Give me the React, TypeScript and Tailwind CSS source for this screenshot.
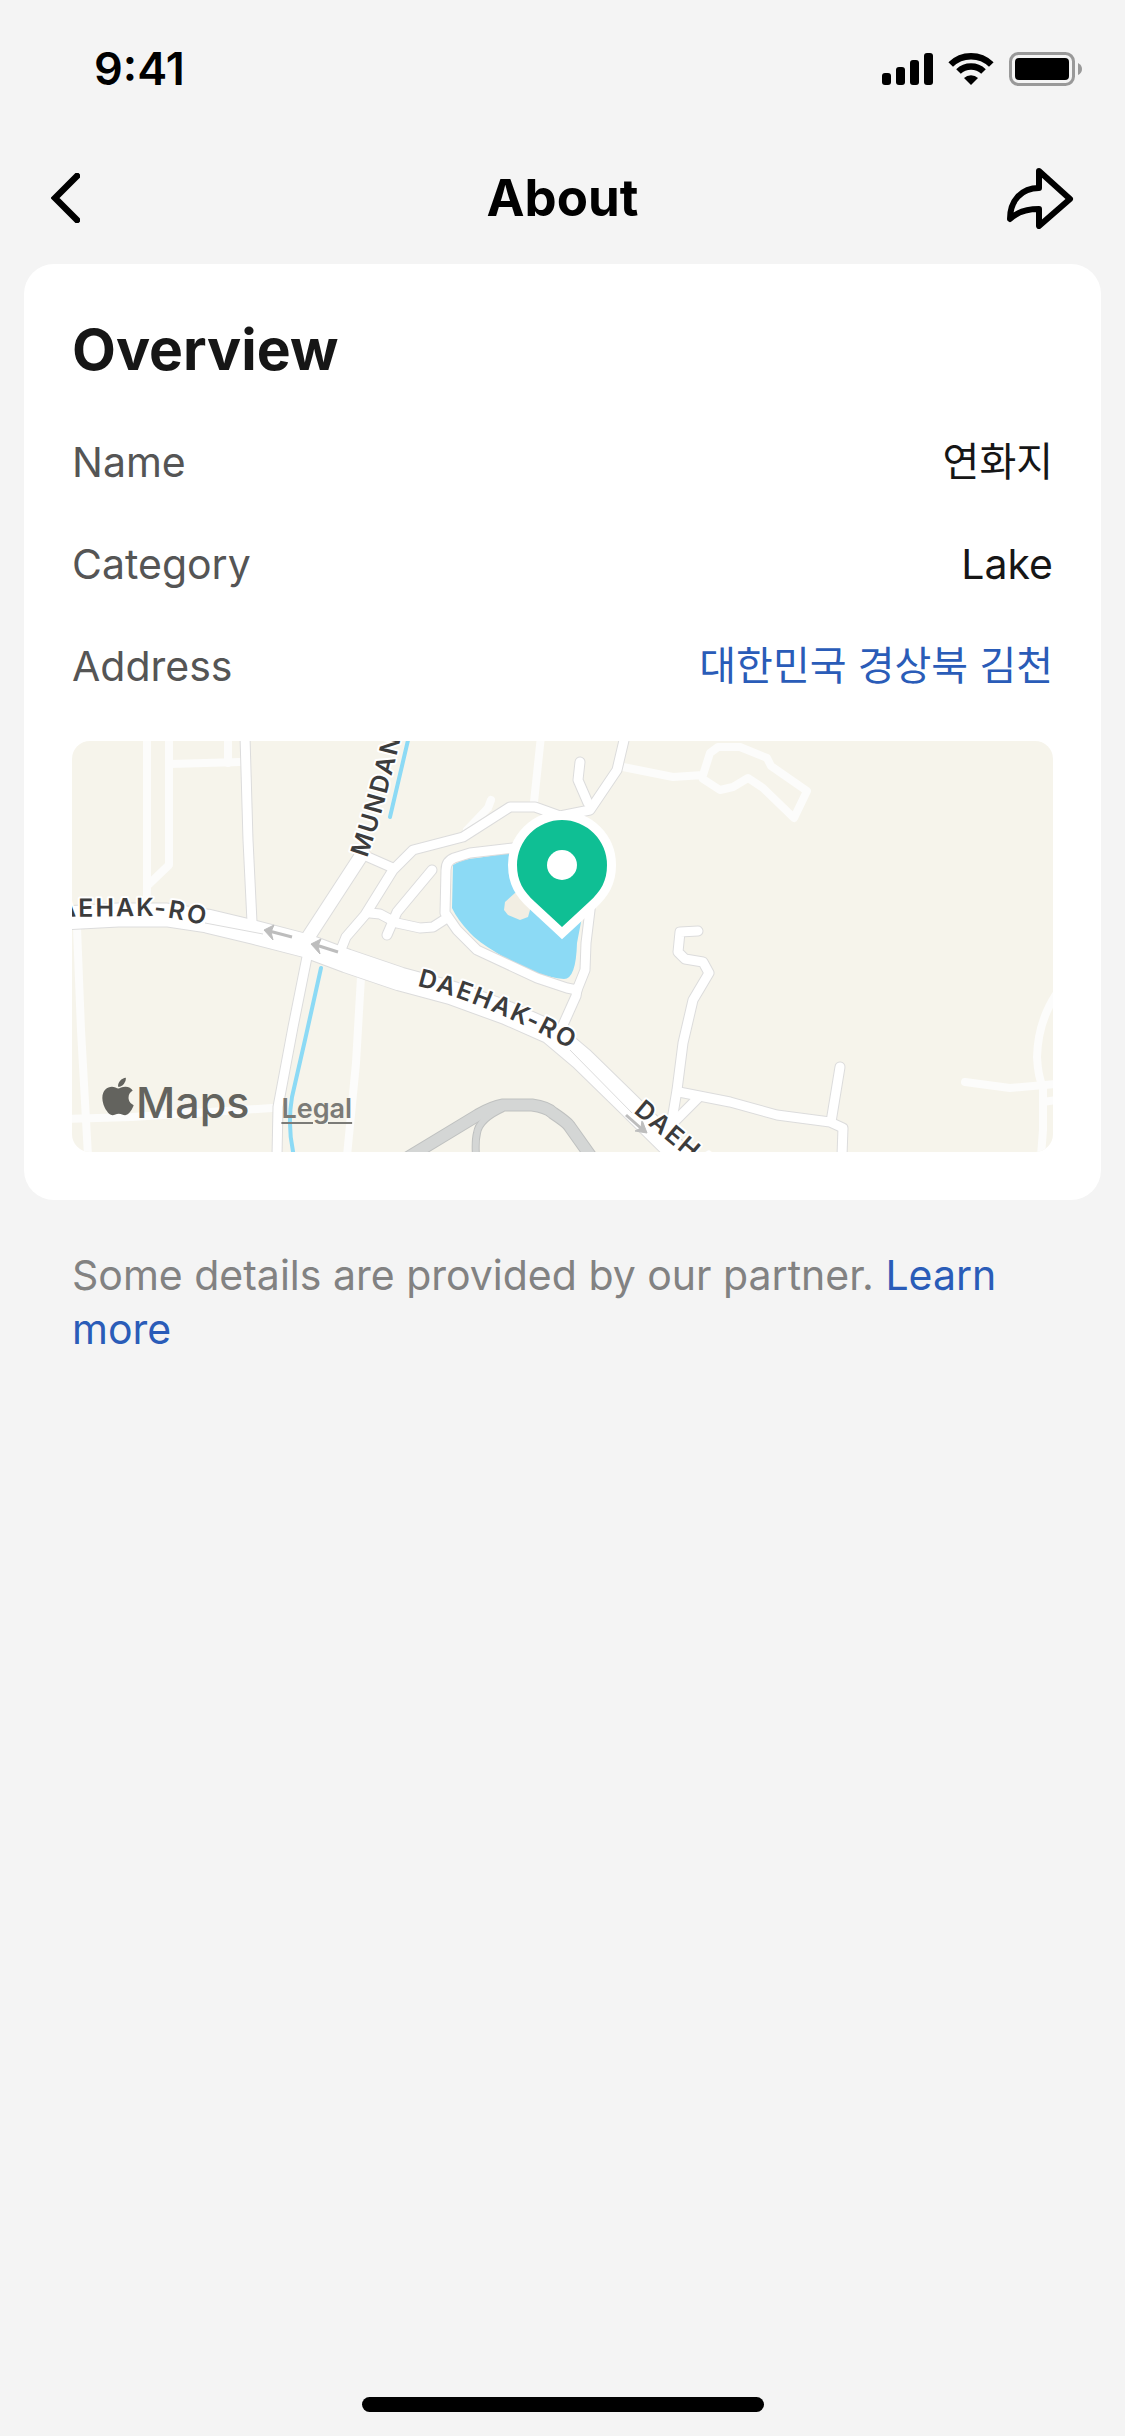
import type { ReactNode } from "react";
import { FaApple } from "react-icons/fa";

const sideStreets = [
  "M75 -5V156",
  "M97 -5V124L76 144",
  "M98 23L168 21",
  "M156 -5V22",
  "M5 187L9 289L16 415",
  "M-5 378L60 376L200 367",
  "M289 236L284 322L275 415",
  "M469 -5L462 61",
  "M419 59L416 67L395 89",
  "M551 26L601 36L631 34L638 12L646 6L668 6L695 17L699 25L735 50L722 77L691 47L676 37L661 46L648 49L631 38",
  "M893 341L938 347L985 343",
  "M985 252Q966 280 965 316Q966 336 971 346L971 389L969 415",
  "M971 361L985 359",
];

const streets = [
  "M173 -5L176 99L180 181",
  "M235 216L221 286L206 366L205 415",
  "M270 206L274 196L293 174L321 129L341 109L391 96L438 66H463L488 75L518 69L545 29L553 -5",
  "M296 116L321 127",
  "M508 21L506 39L516 62",
  "M298 172L308 173L325 182L348 187L361 186L375 177",
  "M360 129L325 171L315 194",
  "M376 176L373 172L374 129Q374 120 382 117L398 112L441 107L500 108L520 140L518 169L514 202L513 229L505 249L495 247L465 237L405 209L385 189Z",
  "M505 249L504 255L491 284",
  "M626 190L608 191L606 211L613 218L631 221L637 232L621 259L611 302L605 349L599 385",
  "M607 351L658 361L705 374L758 381L771 387L770 415",
  "M768 326L759 381",
  "M626 357L601 382",
];

const avenue = "M235 198L291 112";
const mainRoad =
  "M-10 177L46 174H95L135 180L181 191L235 205L275 220L328 238L380 252L435 272L478 291L510 318L551 358L612 418";
const expressway = ["M335 417L406 374Q420 366 431 364H460Q475 366 481 372Q496 382 498 386L520 417", "M404 415Q403 400 405 392Q407 378 431 367"];
const arrows = ["M220 196L197 190", "M266 211L244 204", "M554 374L571 389"];
const arrowHeads = ["M192 189L202 184L199 191L201 199Z", "M239 203L249 198L246 205L248 213Z", "M575 392L563 390L569 387L570 379Z"];

const labels = [
  { id: "label-west", d: "M-33 176L75 175Q105 176 145 188", text: "DAEHAK-RO" },
  { id: "label-middle", d: "M345 245Q425 265 515 318", text: "DAEHAK-RO" },
  { id: "label-east", d: "M561 371L720 505", text: "DAEHAK-RO" },
  { id: "label-north", d: "M295 117Q312 70 340 -50", text: "MUNDAN" },
];

const MapDrawing = () => (
  <svg viewBox="0 0 981 411" className="block w-full" role="img" aria-label="Map">
    <rect width="981" height="411" fill="#f6f4eb" />
    <g fill="none" stroke="#fcfcfb" strokeWidth="8" strokeLinecap="round" strokeLinejoin="round">
      {sideStreets.map((d) => <path key={d} d={d} />)}
    </g>

    <g fill="none" strokeLinejoin="round">
      {expressway.map((d, i) => <path key={d} d={d} stroke="#bfc1c0" strokeWidth={i ? 8 : 13} />)}
      {expressway.map((d, i) => <path key={d} d={d} stroke="#d4d6d5" strokeWidth={i ? 6 : 11} />)}
    </g>

    <path d="M381 124Q390 118 405 117L438 112H500L510 176L505 202Q504 238 492 238Q480 237 461 231Q440 222 425 212Q405 200 398 192Q385 178 380 167Z" fill="#8cdaf5" />
    <path d="M433 161L443 152H452L460 162L456 176L448 179L436 174L432 169Z" fill="#f2eee3" />

    <g fill="none" stroke="#dcdcdc" strokeLinecap="round" strokeLinejoin="round">
      {streets.map((d) => <path key={d} d={d} strokeWidth="11" />)}
      <path d={avenue} strokeWidth="15" />
      <path d={mainRoad} strokeWidth="25" />
    </g>
    <g fill="none" stroke="#ffffff" strokeLinecap="round" strokeLinejoin="round">
      {streets.map((d) => <path key={d} d={d} strokeWidth="9" />)}
      <path d={avenue} strokeWidth="13" />
      <path d={mainRoad} strokeWidth="23" />
    </g>
    <path d="M133 182L191 193M498 309L560 372" fill="none" stroke="#dcdcdc" strokeWidth="1" />

    <path d="M249 227L233 299L220 356Q215 386 222 415M337 -5L318 76" fill="none" stroke="#8cdaf5" strokeWidth="4" strokeLinecap="round" />

    <g fill="#bdbdbd" stroke="#bdbdbd">
      {arrows.map((d) => <path key={d} d={d} strokeWidth="3" />)}
      {arrowHeads.map((d) => <path key={d} d={d} strokeWidth="1" />)}
    </g>

    <g className="text-[25px] font-semibold tracking-[2px]" fill="#3c3c3c" stroke="#ffffff" strokeWidth="4" strokeLinejoin="round" paintOrder="stroke">
      {labels.map(({ id, d, text }) => (
        <g key={id}>
          <path id={id} d={d} fill="none" stroke="none" />
          <text>
            <textPath href={`#${id}`}>{text}</textPath>
          </text>
        </g>
      ))}
    </g>

    <path d="M490 186L463 161C451 150 445 140 445 124A45 45 0 0 1 535 124C535 140 529 150 517 161Z" fill="#0fbf94" stroke="#ffffff" strokeWidth="18" paintOrder="stroke" />
    <circle cx="490" cy="124" r="15" fill="#ffffff" />
  </svg>
);

const StatusBar = () => (
  <div className="flex h-[132px] items-center justify-between pt-1.5 pr-[43px] pl-[94px] text-black">
    <span className="text-[45px] font-semibold">9:41</span>
    <svg width="200" height="34" viewBox="0 0 200 34" aria-hidden="true">
      <rect x="0" y="21" width="9" height="12" rx="3" />
      <rect x="14" y="15" width="9" height="18" rx="3" />
      <rect x="28" y="8" width="9" height="25" rx="3" />
      <rect x="42" y="1" width="9" height="32" rx="3" />
      <path d="M89 33L82 26A10 10 0 0 1 96 26Z" />
      <path d="M76.500 19.500A18 18 0 0 1 101.500 19.500M68.700 12.500A29 29 0 0 1 109.300 12.500" fill="none" stroke="#000" strokeWidth="6.600" />
      <rect x="128.500" y="1.500" width="63" height="31" rx="8" fill="none" stroke="#999" strokeWidth="3" />
      <rect x="133" y="6" width="54" height="22" rx="4" />
      <path d="M196 11Q200 13 200 17T196 23Z" fill="#999" />
    </svg>
  </div>
);

const Header = () => (
  <header className="grid h-[132px] grid-cols-[1fr_auto_1fr] items-center px-[51px] text-black">
    <button type="button" aria-label="Back" className="justify-self-start">
      <svg width="29" height="50" viewBox="0 0 29 50" fill="none" stroke="currentColor" strokeWidth="6.500" strokeLinecap="round">
        <path d="M26 3L4 25L26 47" />
      </svg>
    </button>
    <h1 className="text-[51px] font-bold">About</h1>
    <button type="button" aria-label="Share" className="justify-self-end">
      <svg width="67" height="61" viewBox="0 0 67 61" fill="none" stroke="currentColor" strokeWidth="6" strokeLinejoin="round">
        <path d="M32 3L63 31L32 58V41C20 41 10 44 3 51C3 33 14 20 32 20Z" />
      </svg>
    </button>
  </header>
);

const Row = ({ label, children }: { label: string; children: ReactNode }) => (
  <div className="flex items-center justify-between">
    <dt className="text-[#555555]">{label}</dt>
    <dd className="text-[#161616]">{children}</dd>
  </div>
);

const App = () => {
  return (
    <div className="flex min-h-screen flex-col bg-[#f4f4f4] font-['Inter','Noto_Sans_CJK_KR',sans-serif]">
      <StatusBar />
      <Header />

      <main className="text-[41px] leading-[54px]">
        <section className="mx-6 flex flex-col gap-12 rounded-[30px] bg-white p-12">
          <h2 className="text-[57px] leading-[75px] font-bold text-[#161616]">Overview</h2>
          <dl className="flex flex-col gap-12">
            <Row label="Name"><span className="block text-[40px]">연화지</span></Row>
            <Row label="Category">Lake</Row>
            <Row label="Address">
              <a href="#map" className="block text-[40px] text-[#2a5cb8]">대한민국 경상북 김천</a>
            </Row>
          </dl>

          <div id="map" className="relative overflow-hidden rounded-[18px]">
            <MapDrawing />
            <div className="absolute bottom-4 left-[30px] flex items-baseline gap-8 text-[#63635e]">
              <span className="flex items-baseline gap-0.5 text-[43px] font-medium">
                <FaApple className="h-[43px] w-8" />
                Maps
              </span>
              <a href="#legal" className="text-[27px] font-semibold text-[#7b7b77] underline underline-offset-4">Legal</a>
            </div>
          </div>
        </section>

        <p className="px-[72px] pt-12 text-[#828282]">
          Some details are provided by our partner.{" "}
          <a href="#learn-more" className="text-[#2a5cb8]">Learn more</a>
        </p>
      </main>

      <div className="mx-auto mt-auto mb-6 h-[15px] w-[402px] rounded-full bg-black" />
    </div>
  );
};

export default App;
